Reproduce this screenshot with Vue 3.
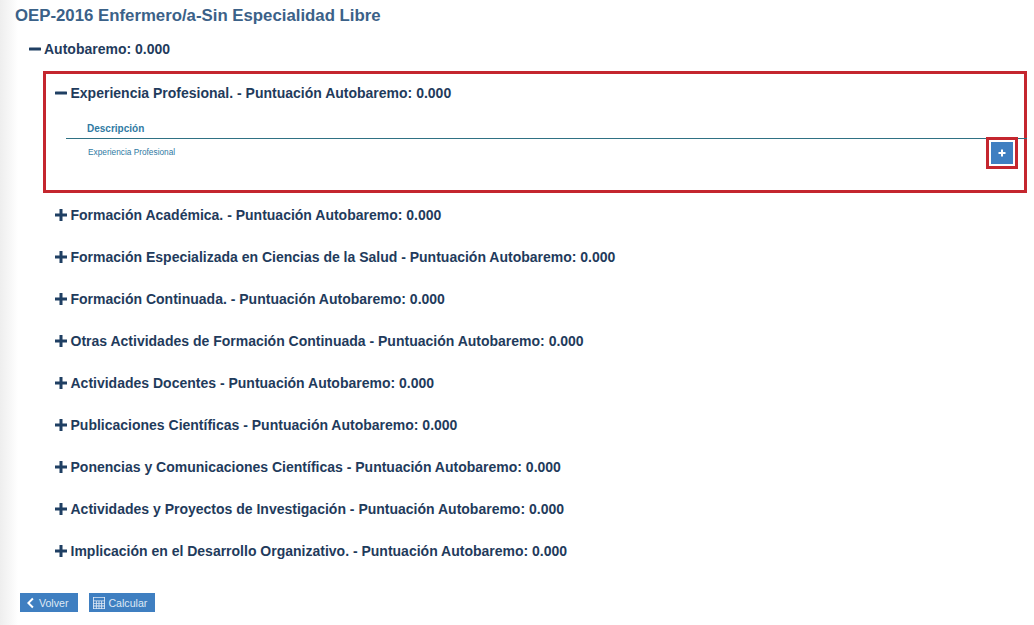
<script setup>
const sections = [
  'Formación Académica. - Puntuación Autobaremo: 0.000',
  'Formación Especializada en Ciencias de la Salud - Puntuación Autobaremo: 0.000',
  'Formación Continuada. - Puntuación Autobaremo: 0.000',
  'Otras Actividades de Formación Continuada - Puntuación Autobaremo: 0.000',
  'Actividades Docentes - Puntuación Autobaremo: 0.000',
  'Publicaciones Científicas - Puntuación Autobaremo: 0.000',
  'Ponencias y Comunicaciones Científicas - Puntuación Autobaremo: 0.000',
  'Actividades y Proyectos de Investigación - Puntuación Autobaremo: 0.000',
  'Implicación en el Desarrollo Organizativo. - Puntuación Autobaremo: 0.000'
]
</script>

<template>
  <div class="page">
    <h1 class="title">OEP-2016 Enfermero/a-Sin Especialidad Libre</h1>

    <div class="root-head">
      <svg class="toggle" viewBox="0 0 12 12"><rect x="0" y="4.5" width="12" height="3" rx="0.5" /></svg>
      <span>Autobaremo: 0.000</span>
    </div>

    <div class="tree">
      <section class="open-box">
        <div class="head">
          <svg class="toggle" viewBox="0 0 12 12"><rect x="0" y="4.5" width="12" height="3" rx="0.5" /></svg>
          <span>Experiencia Profesional. - Puntuación Autobaremo: 0.000</span>
        </div>
        <div class="table">
          <div class="th">Descripción</div>
          <div class="tr">
            <span class="td">Experiencia Profesional</span>
            <div class="add-mark">
              <button class="add" type="button">
                <svg viewBox="0 0 8 8"><path d="M3 0.5h2v2.5h2.5v2h-2.5v2.5h-2v-2.5h-2.5v-2h2.5z" /></svg>
              </button>
            </div>
          </div>
        </div>
      </section>

      <div v-for="s in sections" :key="s" class="head row">
        <svg class="toggle" viewBox="0 0 12 12"><path d="M4.5 0h3v4.5h4.5v3h-4.5v4.5h-3v-4.5h-4.5v-3h4.5z" /></svg>
        <span>{{ s }}</span>
      </div>
    </div>

    <div class="actions">
      <button class="btn back" type="button">
        <svg class="ico-back" viewBox="0 0 8 12"><path d="M6.2 0.8L7.6 2.2 3.8 6l3.8 3.8-1.4 1.4L1 6z" /></svg>
        Volver
      </button>
      <button class="btn calc" type="button">
        <svg class="ico-calc" viewBox="0 0 14 14">
          <path fill-rule="evenodd" d="M0 0h14v14H0zM1 1v3h12V1zM1 5v2h2.4V5zM4.4 5v2h2.1V5zM7.5 5v2h2.1V5zM10.6 5v2H13V5zM1 8v2h2.4V8zM4.4 8v2h2.1V8zM7.5 8v2h2.1V8zM10.6 8v2H13V8zM1 11v2h2.4v-2zM4.4 11v2h2.1v-2zM7.5 11v2h2.1v-2zM10.6 11v2H13v-2z" />
        </svg>
        Calcular
      </button>
    </div>
  </div>
</template>

<style>
html, body {
  margin: 0;
  background: #fff;
}
</style>

<style scoped>
.page {
  width: 1034px;
  height: 625px;
  box-sizing: border-box;
  padding: 7px 0 0 15px;
  overflow: hidden;
  font-family: "Liberation Sans", Arial, sans-serif;
  background: linear-gradient(to right, #eeeeee 0, #f7f7f7 10px, #ffffff 18px);
}

.title {
  margin: 0;
  font-size: 16.8px;
  line-height: 18px;
  font-weight: bold;
  color: #3b6188;
}

.root-head {
  display: flex;
  align-items: center;
  gap: 3px;
  margin: 14px 0 0 14px;
  height: 20px;
  font-size: 14px;
  font-weight: bold;
  color: #1f3b5c;
}

.tree {
  margin-left: 28px;
  margin-top: 12px;
}

.toggle {
  width: 12px;
  height: 12px;
  fill: #1f3f63;
  flex: none;
}

.open-box {
  width: 984px;
  height: 122px;
  box-sizing: border-box;
  border: 3px solid #c4262e;
  padding: 7px 0 0 9px;
  margin-bottom: 10px;
  background: #fff;
}

.head {
  display: flex;
  align-items: center;
  gap: 3.5px;
  height: 24px;
  font-size: 14px;
  font-weight: bold;
  color: #1f3b5c;
}

.row {
  height: 24px;
  margin: 0 0 18px 12px;
}

.table {
  margin: 12px 0 0 11px;
  width: 961px;
}

.th {
  height: 22px;
  box-sizing: border-box;
  padding: 5px 0 0 21px;
  font-size: 10px;
  line-height: 13px;
  font-weight: bold;
  color: #2f7aa3;
  border-bottom: 1px solid #2f7184;
}

.tr {
  position: relative;
  padding: 8px 0 0 22px;
}

.td {
  display: block;
  font-size: 8.3px;
  line-height: 10px;
  color: #2f7aa3;
}

.add-mark {
  position: absolute;
  top: -2px;
  right: 9px;
  width: 32px;
  height: 32px;
  box-sizing: border-box;
  border: 3px solid #c4262e;
  padding: 2px;
  background: #fff;
}

.add {
  display: flex;
  align-items: center;
  justify-content: center;
  width: 22px;
  height: 22px;
  padding: 0;
  border: 0;
  background: #3f7fc1;
}

.add svg {
  width: 8px;
  height: 8px;
  fill: #fff;
}

.actions {
  display: flex;
  gap: 11px;
  margin: 30px 0 0 5px;
}

.btn {
  display: flex;
  align-items: center;
  height: 19px;
  border: 0;
  background: #3f7fc1;
  color: #dfe9f5;
  font-family: "Liberation Sans", Arial, sans-serif;
  font-size: 10.6px;
}

.back {
  gap: 5px;
  padding: 0 10px 0 6px;
}

.calc {
  gap: 3px;
  padding: 0 8px 0 4px;
}

.ico-back {
  width: 8px;
  height: 12px;
  fill: #fff;
}

.ico-calc {
  width: 12px;
  height: 12px;
  fill: #dfe9f5;
}
</style>
